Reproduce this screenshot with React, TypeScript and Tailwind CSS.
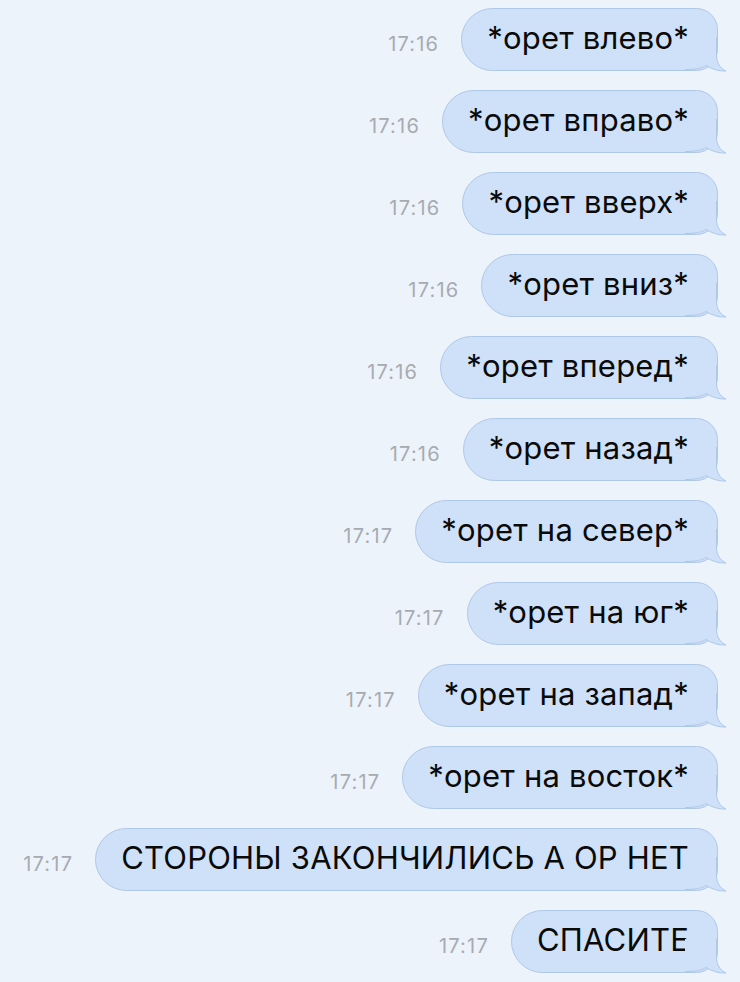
import React from "react";

const messages = [
  { time: "17:16", text: "*орет влево*" },
  { time: "17:16", text: "*орет вправо*" },
  { time: "17:16", text: "*орет вверх*" },
  { time: "17:16", text: "*орет вниз*" },
  { time: "17:16", text: "*орет вперед*" },
  { time: "17:16", text: "*орет назад*" },
  { time: "17:17", text: "*орет на север*" },
  { time: "17:17", text: "*орет на юг*" },
  { time: "17:17", text: "*орет на запад*" },
  { time: "17:17", text: "*орет на восток*" },
  { time: "17:17", text: "СТОРОНЫ ЗАКОНЧИЛИСЬ А ОР НЕТ" },
  { time: "17:17", text: "СПАСИТЕ" },
];

const Tail = () => (
  <svg width="44" height="36" viewBox="0 0 44 36" className="absolute right-[-12px] bottom-[-3px]">
    <path
      d="M0 0 H31.5 V18 C31.5 26 35 31 41 34 C34 34.5 27 32 21 28.5 C17 31 12 32.5 0 32.5 Z"
      fill="#cee1f9"
    />
    <path
      d="M31.5 0 V18 C31.5 26 35 31 41 34 C34 34.5 27 32 21 28.5 C17 31 12 32.5 0 32.5"
      fill="none"
      stroke="#afc8e8"
      strokeWidth="1"
    />
  </svg>
);

const App = () => {
  return (
    <div
      className="w-[740px] h-[982px] bg-[#edf3fb] overflow-hidden flex flex-col gap-[19px] pt-2 pr-[22px]"
      style={{ fontFamily: 'Inter, "Liberation Sans", sans-serif' }}
    >
      {messages.map((m, i) => (
        <div key={i} className="flex justify-end items-center">
          <span className="mr-[22px] mt-[9px] text-[20px] leading-5 tracking-[1.2px] text-[#a6abb2]">{m.time}</span>
          <div className="relative h-[63px] flex items-center pl-[25px] pr-[28px] pb-[5px] bg-[#cee1f9] border border-[#afc8e8] rounded-l-[32px] rounded-tr-[22px] rounded-br-[22px]">
            <span className="text-[31px] leading-none tracking-[0.2px] text-[#0a0a0a] whitespace-nowrap">{m.text}</span>
            <Tail />
          </div>
        </div>
      ))}
    </div>
  );
};

export default App;
